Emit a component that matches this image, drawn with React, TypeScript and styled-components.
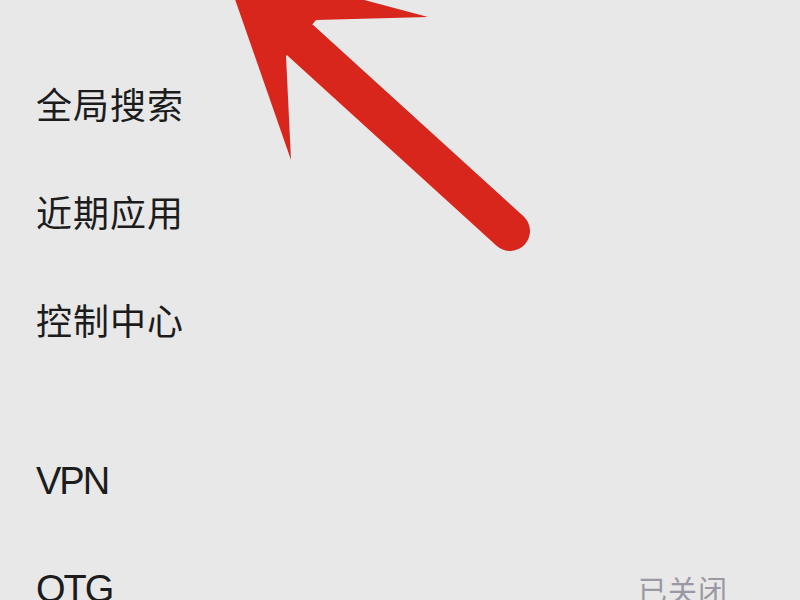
import styled, { createGlobalStyle } from "styled-components"

const GlobalStyle = createGlobalStyle`
  html, body {
    margin: 0;
    padding: 0;
    background: #e8e8e8;
    overflow: hidden;
  }
`

const Screen = styled.div`
  position: relative;
  width: 800px;
  height: 600px;
  overflow: hidden;
  background: #e8e8e8;
  font-family: "Noto Sans CJK SC", "Noto Sans", sans-serif;
`

const List = styled.div`
  display: flex;
  flex-direction: column;
  padding-top: 49px;
`

const Group = styled.div<{ $gap?: number }>`
  display: flex;
  flex-direction: column;
  margin-top: ${(p) => p.$gap ?? 0}px;
`

const Row = styled.div`
  display: flex;
  align-items: center;
  justify-content: space-between;
  height: 108px;
  padding: 0 72px 0 36px;
`

const Label = styled.span<{ $latin?: boolean }>`
  color: #1c1c1c;
  font-size: ${(p) => (p.$latin ? "38px" : "36px")};
  font-family: ${(p) =>
    p.$latin
      ? `"Liberation Sans", "Noto Sans CJK SC", sans-serif`
      : `"Noto Sans CJK SC", sans-serif`};
  letter-spacing: ${(p) => (p.$latin ? "-2px" : "1px")};
  line-height: 1;
`

const Value = styled.span`
  color: #9a98a2;
  font-size: 29px;
  letter-spacing: 1px;
  line-height: 1;
`

const ArrowLayer = styled.svg`
  position: absolute;
  left: 0;
  top: 0;
  pointer-events: none;
`

const groups = [
  [{ label: "全局搜索" }, { label: "近期应用" }, { label: "控制中心" }],
  [
    { label: "VPN", latin: true },
    { label: "OTG", latin: true, value: "已关闭" },
  ],
]

export default function App() {
  return (
    <Screen>
      <GlobalStyle />
      <List>
        {groups.map((rows, gi) => (
          <Group key={gi} $gap={gi === 0 ? 0 : 54}>
            {rows.map((r) => (
              <Row key={r.label}>
                <Label $latin={"latin" in r}>{r.label}</Label>
                {"value" in r && <Value>{r.value}</Value>}
              </Row>
            ))}
          </Group>
        ))}
      </List>
      <ArrowLayer width="800" height="600" viewBox="0 0 800 600">
        <line
          x1="300"
          y1="40"
          x2="510"
          y2="231"
          stroke="#d8261d"
          strokeWidth="40"
          strokeLinecap="round"
        />
        <polygon
          points="222,-38 428,17 316,20 286,56 291,160"
          fill="#d8261d"
        />
      </ArrowLayer>
    </Screen>
  )
}
